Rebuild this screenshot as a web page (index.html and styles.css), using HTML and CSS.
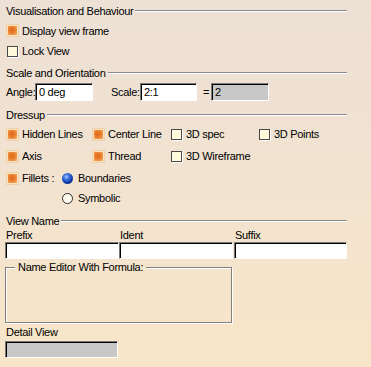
FILE: index.html
```html
<!DOCTYPE html>
<html lang="en">
<head>
  <meta charset="UTF-8" />
  <title>View Properties</title>
  <link rel="stylesheet" href="styles.css">
</head>
<body>

<div class="panel">
  <!-- Visualisation -->
  <div class="head head-first"><span>Visualisation and Behaviour</span><i class="rule"></i></div>
  <div class="row row-vis1"><span class="cb on"></span>Display view frame</div>
  <div class="row row-vis2"><span class="cb"></span>Lock View</div>

  <!-- Scale -->
  <div class="head head-scale"><span>Scale and Orientation</span><i class="rule"></i></div>
  <div class="scale-row">
    <span class="lbl">Angle:</span>
    <span class="field angle">0 deg</span>
    <span class="lbl scale-lbl">Scale:</span>
    <span class="field scale">2:1</span>
    <span class="eq">=</span>
    <span class="field off result">2</span>
  </div>

  <!-- Dressup -->
  <div class="head head-dress"><span>Dressup</span><i class="rule"></i></div>
  <div class="dress">
    <div class="row"><span class="cb on"></span>Hidden Lines</div>
    <div class="row"><span class="cb on"></span>Center Line</div>
    <div class="row"><span class="cb"></span>3D spec</div>
    <div class="row"><span class="cb"></span>3D Points</div>
    <div class="row"><span class="cb on"></span>Axis</div>
    <div class="row"><span class="cb on"></span>Thread</div>
    <div class="row"><span class="cb"></span>3D Wireframe</div>
    <div class="row"></div>
  </div>
  <div class="row fillets">
    <span class="cb on"></span><span class="fil-lbl">Fillets :</span>
    <span class="rb on"></span>Boundaries
  </div>
  <div class="row symbolic"><span class="rb"></span>Symbolic</div>

  <!-- View name -->
  <div class="head head-name"><span>View Name</span><i class="rule"></i></div>
  <div class="names">
    <div class="name-col">
      <span class="name-lbl">Prefix</span>
      <span class="field"></span>
    </div>
    <div class="name-col">
      <span class="name-lbl">Ident</span>
      <span class="field"></span>
    </div>
    <div class="name-col">
      <span class="name-lbl">Suffix</span>
      <span class="field"></span>
    </div>
  </div>

  <div class="formula">
    <span class="legend">Name Editor With Formula:</span>
  </div>

  <div class="detail-lbl">Detail View</div>
  <span class="field off detail"></span>
</div>

</body>
</html>
```

FILE: styles.css
```css
* {
  box-sizing: border-box;
}
body {
  margin: 0;
  width: 371px;
  height: 367px;
  overflow: hidden;
  background: linear-gradient(to bottom, #ede0d5 0%, #f2e3d0 50%, #f8e6c8 100%);
  font-family: 'Liberation Sans', Arial, sans-serif;
  font-size: 11px;
  letter-spacing: -0.3px;
  color: #000;
}

.panel {
  padding: 0 24px 0 0;
}

/* section headers with etched rule */
.head {
  display: flex;
  align-items: center;
  padding-left: 6px;
}
.head span {
  white-space: nowrap;
}
.rule {
  flex: 1;
  height: 2px;
  margin-left: 2px;
  border-top: 1px solid #8a8a8a;
  border-bottom: 1px solid #fff;
}
.head-first { height: 21px; }
.head-scale { height: 21px; }
.head-dress { height: 16px; margin-top: 6px; }
.head-name { height: 16px; margin-top: 6px; }

.row {
  display: flex;
  align-items: center;
  padding-left: 7px;
  white-space: nowrap;
}
.row-vis1 { height: 19px; }
.row-vis2 { height: 22px; }

/* checkboxes */
.cb {
  display: inline-block;
  width: 11px;
  height: 11px;
  margin-right: 4px;
  background: #fffbdc;
  border: 1px solid #4a4a4a;
  box-shadow: 1px 1px 0 #fff;
  flex: none;
}
.cb.on {
  border: 1px solid #fbe3c2;
  background: radial-gradient(circle at 45% 45%, #e0691a 0%, #e87e2c 45%, #f4b878 100%);
  box-shadow: 0 0 0 1px #f0d0a8;
}

/* radio buttons */
.rb {
  display: inline-block;
  width: 11px;
  height: 11px;
  margin-right: 5px;
  border-radius: 50%;
  background: #fffdf0;
  border: 1px solid #2a2a2a;
  flex: none;
}
.rb.on {
  border: none;
  background: radial-gradient(circle at 40% 35%, #a8c4ff 0%, #3a6ee0 30%, #0f3aa8 60%, #061a55 100%);
}

/* text fields */
.field {
  display: block;
  height: 18px;
  padding: 1px 3px;
  line-height: 14px;
  background: #fff;
  border: 1px solid;
  border-color: #7a7a7a #fff #fff #7a7a7a;
  box-shadow: inset 1px 1px 0 #000;
  white-space: nowrap;
}
.field.off {
  background: #c8c8c8;
}

.scale-row {
  display: flex;
  align-items: center;
  height: 18px;
  padding-left: 6px;
}
.lbl {
  width: 29px;
}
.angle { width: 58px; }
.scale-lbl { margin-left: 18px; }
.scale { width: 57px; }
.eq { width: 8px; margin-left: 6px; }
.result { width: 58px; }

/* dressup grid */
.dress {
  display: grid;
  grid-template-columns: 86px 78px 88px auto;
  grid-auto-rows: 22px;
}
.fillets { height: 22px; }
.fil-lbl { width: 40px; }
.symbolic {
  height: 18px;
  padding-left: 62px;
}

/* view name */
.names {
  display: grid;
  grid-template-columns: 114px 114px 114px;
  padding-left: 5px;
}
.name-col {
  display: flex;
  flex-direction: column;
}
.name-lbl {
  height: 13px;
  line-height: 13px;
  padding-left: 1px;
}
.names .field {
  height: 17px;
}
.names .name-col:nth-child(3) {
  margin-left: 1px;
}

.formula {
  position: relative;
  width: 227px;
  height: 56px;
  margin: 8px 0 0 5px;
  border: 1px solid #808080;
  box-shadow: 1px 1px 0 #fff, inset 1px 1px 0 #fff;
}
.legend {
  position: absolute;
  top: -7px;
  left: 9px;
  padding: 0 3px;
  line-height: 12px;
  background: #f4e4cc;
}

.detail-lbl {
  height: 16px;
  line-height: 16px;
  padding-left: 6px;
  margin-top: 1px;
}
.field.detail {
  width: 113px;
  height: 17px;
  margin: 1px 0 0 5px;
}
```
